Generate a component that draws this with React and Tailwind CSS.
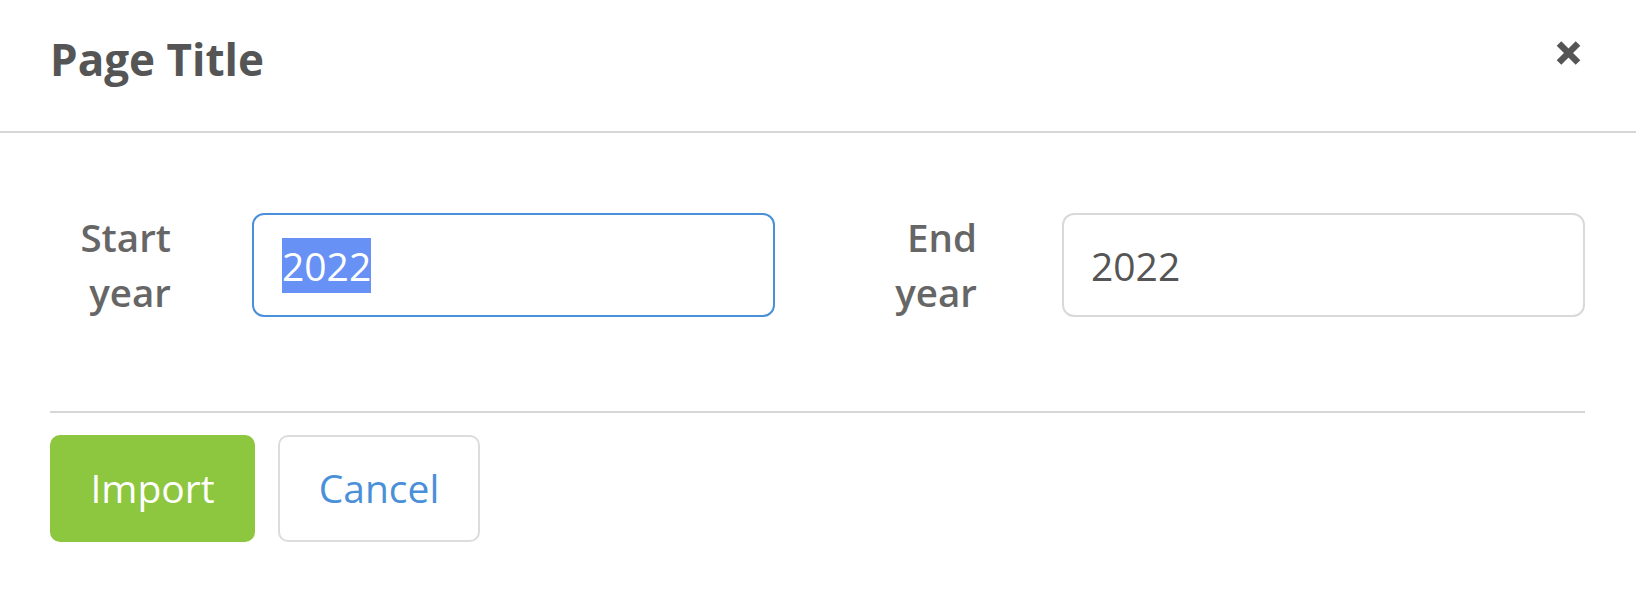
export default function App() {
  return (
    <div className="w-[1636px] h-[597px] bg-white font-['Open_Sans',sans-serif] overflow-hidden">
      <div className="flex justify-between h-[133px] border-b-2 border-[#d6d6d6] pl-[50px] pr-[54px] pt-[35px]">
        <h1 className="text-[44px] font-bold leading-[48px] text-[#555555]">Page Title</h1>
        <svg className="mt-[5px]" width="27" height="26" viewBox="0 0 27 26" fill="none">
          <path d="M4 3.5 L23 22.5 M23 3.5 L4 22.5" stroke="#555555" strokeWidth="6.5" />
        </svg>
      </div>
      <div className="flex items-center pl-[50px] pt-[77px]">
        <div className="w-[121px] text-right text-[38.5px] font-semibold leading-[55px] text-[#666666]">
          Start<br />year
        </div>
        <div className="ml-[81px] w-[523px] h-[104px] border-2 border-[#4a90d9] rounded-[12px] pl-[28px] flex items-center">
          <span className="bg-[#6891f6] text-white text-[39px] leading-[55px]">2022</span>
        </div>
        <div className="w-[202px] text-right text-[38.5px] font-semibold leading-[55px] text-[#666666]">
          End<br />year
        </div>
        <div className="ml-[85px] w-[523px] h-[104px] border-2 border-[#d9d9d9] rounded-[12px] pl-[27px] flex items-center">
          <span className="text-[#555555] text-[39px] leading-[55px]">2022</span>
        </div>
      </div>
      <div className="ml-[50px] w-[1535px] h-[2px] bg-[#d6d6d6] mt-[91px]" />
      <div className="flex pl-[50px] mt-[22px]">
        <button className="w-[205px] h-[107px] rounded-[10px] bg-[#8dc63f] text-white text-[39px] flex items-center justify-center">
          Import
        </button>
        <button className="ml-[23px] w-[202px] h-[107px] rounded-[10px] border-2 border-[#dcdcdc] bg-white text-[#4a90d9] text-[39px] flex items-center justify-center">
          Cancel
        </button>
      </div>
    </div>
  );
}
